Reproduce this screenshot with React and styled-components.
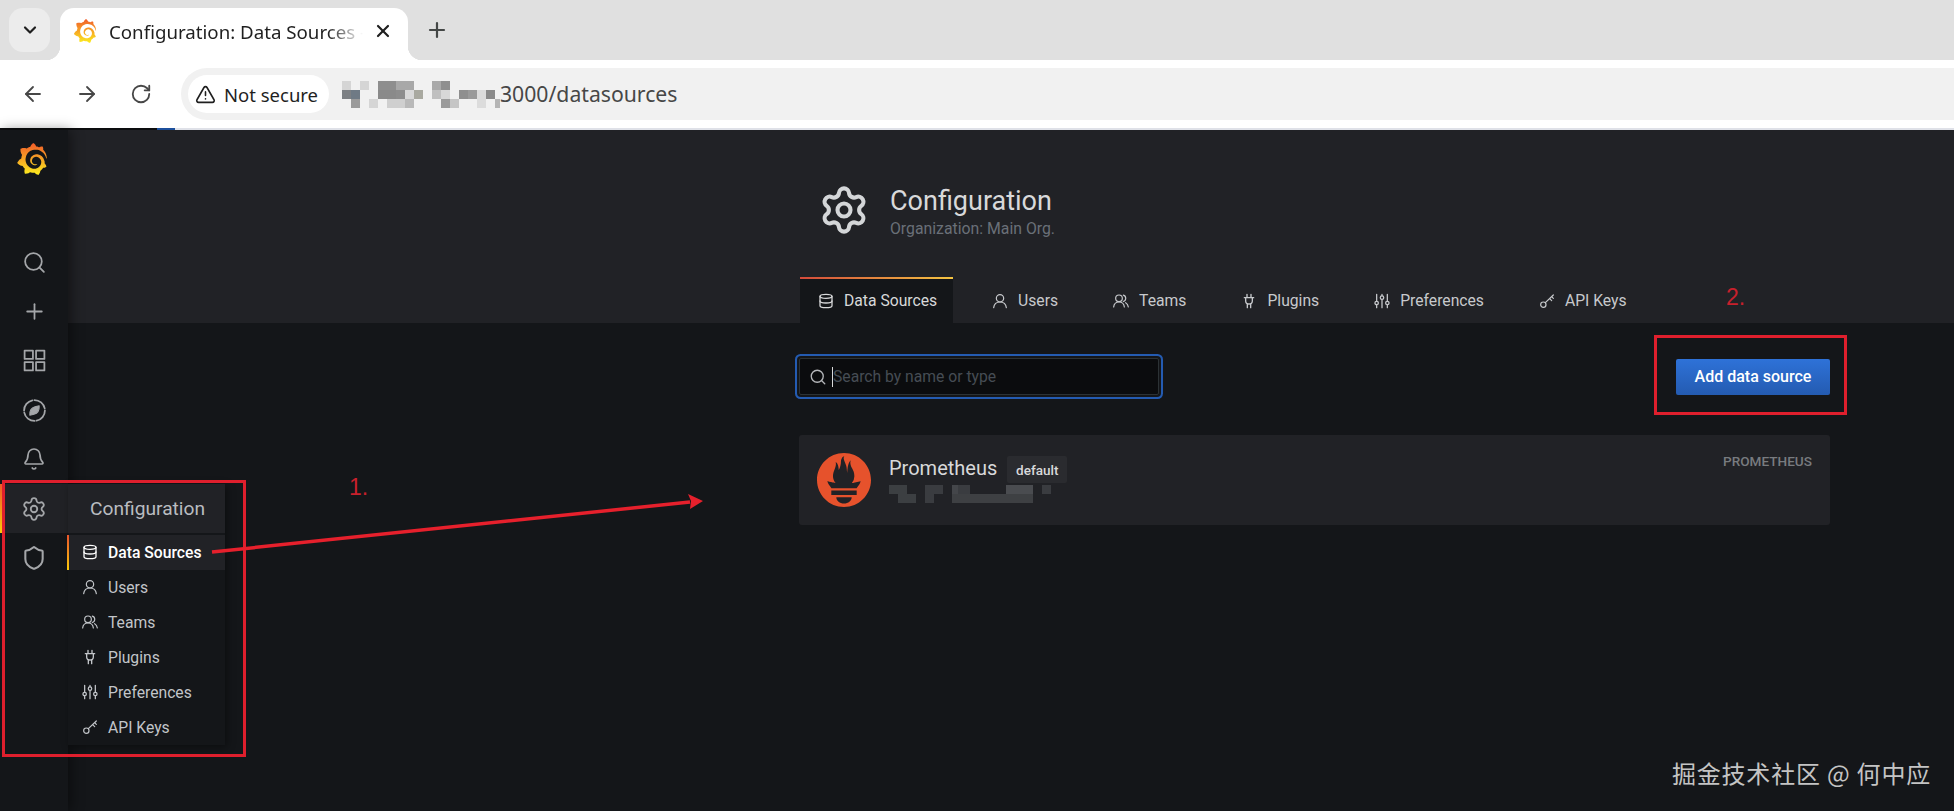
import styled, { createGlobalStyle } from 'styled-components'
import { ChevronDown, X, Plus, ArrowLeft, ArrowRight, RotateCw, TriangleAlert, Search, Bell, Settings, Shield, Database } from 'lucide-react'
import { SiGrafana, SiPrometheus } from 'react-icons/si'

const GlobalStyle = createGlobalStyle`
	html, body {
		margin: 0;
		padding: 0;
		background: #141619;
	}
	* {
		box-sizing: border-box;
	}
`

const Page = styled.div`
	position: relative;
	width: 1954px;
	height: 811px;
	overflow: hidden;
	display: flex;
	flex-direction: column;
	font-family: Roboto, "Liberation Sans", sans-serif;
`

/* browser chrome */
const TabStrip = styled.div`
	height: 60px;
	background: #e0e0e0;
	display: flex;
	align-items: flex-start;
	padding: 8px 0 0 9px;
	font-family: "Noto Sans", "Open Sans", sans-serif;
`

const TabMenu = styled.div`
	width: 41px;
	height: 44px;
	border-radius: 14px;
	background: #ececec;
	color: #1f1f1f;
	display: flex;
	align-items: center;
	justify-content: center;
`

const BrowserTab = styled.div`
	position: relative;
	width: 348px;
	height: 52px;
	margin-left: 10px;
	padding: 0 15px 6px 13px;
	background: #fff;
	border-radius: 14px 14px 0 0;
	display: flex;
	align-items: center;
	color: #1f1f1f;

	&::before, &::after {
		content: '';
		position: absolute;
		bottom: 0;
		width: 14px;
		height: 14px;
	}
	&::before {
		left: -14px;
		background: radial-gradient(circle at 0 0, transparent 14px, #fff 14.5px);
	}
	&::after {
		right: -14px;
		background: radial-gradient(circle at 100% 0, transparent 14px, #fff 14.5px);
	}
`

const TabTitle = styled.span`
	flex: 1;
	margin-left: 12px;
	margin-right: 10px;
	font-size: 18.7px;
	white-space: nowrap;
	overflow: hidden;
	-webkit-mask-image: linear-gradient(to right, #000 86%, transparent 100%);
	mask-image: linear-gradient(to right, #000 86%, transparent 100%);
`

const NewTab = styled.div`
	margin: 10px 0 0 17px;
	color: #444746;
	display: flex;
`

const Toolbar = styled.div`
	position: relative;
	height: 70px;
	background: #fff;
	display: flex;
	align-items: center;
	padding: 0 0 0 21px;
	border-bottom: 2px solid #dfe1e8;
	font-family: "Noto Sans", "Open Sans", sans-serif;
	color: #474747;

	&::after {
		content: '';
		position: absolute;
		left: 0;
		bottom: -2px;
		width: 175px;
		height: 2px;
		background: linear-gradient(to right, #0c0d0f 90%, #1c4f9c 90%);
	}
`

const NavButton = styled.div`
	width: 24px;
	height: 24px;
	margin-right: 30px;
	color: #474747;
	display: flex;
	align-items: center;
	justify-content: center;
`

const AddressBar = styled.div`
	flex: 1;
	height: 52px;
	margin-left: -2px;
	padding-left: 7px;
	background: #f1f1f1;
	border-radius: 26px 0 0 26px;
	display: flex;
	align-items: center;
`

const SecurityChip = styled.div`
	width: 141px;
	height: 38px;
	margin-right: 13px;
	padding-left: 7px;
	background: #fff;
	border-radius: 19px;
	display: flex;
	align-items: center;
	gap: 8px;
	font-size: 18.5px;
	color: #1f1f1f;
	white-space: nowrap;
`

const AddressText = styled.span`
	font-size: 21.2px;
	color: #474747;
	line-height: 1;
`

/* grafana shell */
const Shell = styled.div`
	flex: 1;
	display: flex;
	min-height: 0;
`

const SideMenu = styled.nav`
	position: relative;
	z-index: 2;
	width: 68px;
	flex-shrink: 0;
	background: #141619;
	box-shadow: 3px 0 12px rgba(0, 0, 0, 0.45);
	display: flex;
	flex-direction: column;
`

const LogoBlock = styled.div`
	height: 108px;
	padding: 13px 0 0 16px;
`

const SideItem = styled.div`
	position: relative;
	height: 49.2px;
	display: flex;
	align-items: center;
	justify-content: center;
	color: #a4a6a9;
	background: ${p => (p.$active ? '#212226' : 'transparent')};

	&::before {
		content: '';
		display: ${p => (p.$active ? 'block' : 'none')};
		position: absolute;
		left: 0;
		top: 0;
		bottom: 0;
		width: 2px;
		background: linear-gradient(#f05a28, #fbca0a);
	}
`

const Flyout = styled.div`
	position: absolute;
	left: 68px;
	top: 0;
	width: 157px;
	background: #141619;
	box-shadow: 2px 2px 8px rgba(0, 0, 0, 0.4);
`

const FlyoutTitle = styled.div`
	height: 49px;
	margin-bottom: 2px;
	padding-left: 22px;
	display: flex;
	align-items: center;
	background: #212226;
	font-size: 19.2px;
	color: #b9bcc0;
`

const FlyoutItem = styled.div`
	position: relative;
	height: 35px;
	padding-left: 14px;
	display: flex;
	align-items: center;
	gap: 10px;
	font-size: 15.7px;
	font-weight: ${p => (p.$active ? 500 : 400)};
	color: ${p => (p.$active ? '#ffffff' : '#c2c5c9')};
	background: ${p => (p.$active ? '#212226' : 'transparent')};

	&::before {
		content: '';
		display: ${p => (p.$active ? 'block' : 'none')};
		position: absolute;
		left: -1px;
		top: 0;
		bottom: 0;
		width: 2px;
		background: linear-gradient(#e9532b, #fbca0a);
	}
`

const Main = styled.main`
	flex: 1;
	display: flex;
	flex-direction: column;
	min-width: 0;
	background: #141619;
`

const PageHeader = styled.header`
	height: 193px;
	padding: 54px 124px 0 732px;
	background: #212226;
	display: flex;
	flex-direction: column;
	justify-content: space-between;
`

const HeaderInfo = styled.div`
	display: flex;
	align-items: flex-start;
	gap: 20px;
	padding-left: 18px;
	color: #d4d6d8;
`

const HeaderText = styled.div`
	padding-top: 2px;
`

const HeaderTitle = styled.h1`
	margin: 0;
	font-size: 27px;
	font-weight: 400;
	line-height: 30px;
	color: #d8d9da;
`

const HeaderSub = styled.div`
	margin-top: 3px;
	font-size: 15.8px;
	line-height: 20px;
	color: #6a7078;
`

const Tabs = styled.div`
	display: flex;
	gap: 21px;
`

const Tab = styled.div`
	position: relative;
	height: 46px;
	padding: 1px 16px 0 18px;
	display: flex;
	align-items: center;
	gap: 10px;
	font-size: 15.7px;
	color: ${p => (p.$active ? '#d8d9da' : '#c7c9cc')};
	background: ${p => (p.$active ? '#141619' : 'transparent')};

	&::before {
		content: '';
		display: ${p => (p.$active ? 'block' : 'none')};
		position: absolute;
		left: 0;
		right: 0;
		top: 0;
		height: 2px;
		background: linear-gradient(to right, #d44a3a, #f5c542);
	}
`

const Content = styled.section`
	padding: 35px 124px 0 731px;
`

const ActionRow = styled.div`
	display: flex;
	align-items: center;
	justify-content: space-between;
`

const SearchBox = styled.div`
	width: 360px;
	height: 37px;
	padding-left: 9px;
	background: #0b0c0e;
	border: 1px solid #2c3235;
	border-radius: 2px;
	box-shadow: 0 0 0 2px #141619, 0 0 0 4px #245bb1;
	display: flex;
	align-items: center;
	gap: 5px;
	color: #b5b7ba;
`

const Placeholder = styled.span`
	border-left: 1px solid #d8d9da;
	height: 20px;
	line-height: 20px;
	font-size: 15.7px;
	color: #464c54;
`

const AddButton = styled.button`
	width: 154px;
	height: 36px;
	padding: 0;
	border: none;
	border-radius: 2px;
	background: linear-gradient(#2e72d8, #245bb1);
	color: #fff;
	font-family: inherit;
	font-size: 16px;
	font-weight: 500;
`

const SourceCard = styled.div`
	height: 90px;
	margin-top: 40px;
	padding: 18px 18px 0;
	background: #212226;
	border-radius: 3px;
	display: flex;
	align-items: flex-start;
	gap: 18px;
`

const SourceBody = styled.div`
	flex: 1;
`

const SourceHead = styled.div`
	display: flex;
	align-items: center;
	gap: 10px;
	height: 30px;
	margin-bottom: 2px;
`

const SourceName = styled.span`
	font-size: 20px;
	color: #d8d9da;
`

const Badge = styled.span`
	width: 60px;
	height: 27px;
	margin-top: 3px;
	background: #2a2b2f;
	border-radius: 2px;
	display: flex;
	align-items: center;
	justify-content: center;
	font-size: 13.5px;
	font-weight: 500;
	color: #d8d9da;
`

const SourceType = styled.span`
	font-size: 13.6px;
	font-weight: 500;
	color: #787b7f;
`

/* annotations drawn on top of the screenshot */
const RedBox = styled.div`
	position: absolute;
	z-index: 5;
	left: ${p => p.$x}px;
	top: ${p => p.$y}px;
	width: ${p => p.$w}px;
	height: ${p => p.$h}px;
	border: 3px solid #df1f2d;
	pointer-events: none;
`

const RedNumber = styled.span`
	position: absolute;
	z-index: 5;
	left: ${p => p.$x}px;
	top: ${p => p.$y}px;
	font-family: "Liberation Sans", sans-serif;
	font-size: 23px;
	line-height: 24px;
	color: #c8202c;
`

const ArrowLayer = styled.svg`
	position: absolute;
	z-index: 5;
	left: 200px;
	top: 480px;
	pointer-events: none;
`

const Watermark = styled.div`
	position: absolute;
	z-index: 5;
	right: 23px;
	bottom: 23px;
	font-family: "Noto Sans CJK SC", "Noto Sans", sans-serif;
	font-size: 24px;
	line-height: 30px;
	letter-spacing: 0.8px;
	color: #c4c4c4;
`

const GrafanaLogo = ({ size }) => <SiGrafana size={size} fill="url(#grafanaFill)" />

const Stroke = ({ size = 16, children, width = 1.8 }) => (
	<svg width={size} height={size} viewBox="0 0 24 24" fill="none" stroke="currentColor" strokeWidth={width} strokeLinecap="round" strokeLinejoin="round">
		{children}
	</svg>
)

const PersonIcon = ({ size }) => (
	<Stroke size={size}>
		<circle cx="12" cy="8" r="5.5" />
		<path d="M2.5 22c.6-5 4.3-8.5 9.5-8.5s8.9 3.500 9.500 8.500" />
	</Stroke>
)

const TeamIcon = ({ size }) => (
	<Stroke size={size}>
		<circle cx="9" cy="8" r="5" />
		<path d="M1 21c.5-4.500 3.500-7.500 8-7.500s7.500 3 8 7.500" />
		<path d="M15.500 3.200a5 5 0 0 1 0 9.600M19 14.500c2.200 1.300 3.600 3.500 4 6.500" />
	</Stroke>
)

const KeyIcon = ({ size }) => (
	<Stroke size={size}>
		<circle cx="6.500" cy="17.500" r="4" />
		<path d="M9.500 14.500 21.500 3M16 8.500l3 3M19 5.500l2.500 2.500" />
	</Stroke>
)

const GridIcon = () => (
	<Stroke size={25} width={1.700}>
		<rect x="2.500" y="2.500" width="8" height="8" />
		<rect x="13.500" y="2.500" width="8" height="8" />
		<rect x="2.500" y="13.500" width="8" height="8" />
		<rect x="13.500" y="13.500" width="8" height="8" />
	</Stroke>
)

const CompassIcon = () => (
	<Stroke size={25} width={1.700}>
		<path d="M12 2a10 10 0 0 1 9.800 8M22 12a10 10 0 0 1-8 9.800M12 22a10 10 0 0 1-9.800-8M2 12a10 10 0 0 1 8-9.800" />
		<path d="M16.500 7.500c.3 4-1.500 7.300-5 8.200l-4 .8c-.3-4 1.500-7.300 5-8.200z" fill="currentColor" strokeWidth="1" />
	</Stroke>
)

const PluginIcon = ({ size }) => (
	<Stroke size={size} width={2}>
		<path d="M9 2v5M15 2v5M5 7h14M7 7v5c0 2.500 2 4.500 5 4.500s5-2 5-4.500V7" />
		<path d="M9.500 16.500V22M14.500 16.500V22" />
	</Stroke>
)

const SlidersIcon = ({ size }) => (
	<Stroke size={size} width={1.900}>
		<path d="M4 2v10M4 18v4M12 2v2M12 10v12M20 2v10M20 18v4" />
		<circle cx="4" cy="15" r="2.600" />
		<circle cx="12" cy="7" r="2.600" />
		<circle cx="20" cy="15" r="2.600" />
	</Stroke>
)

const Pixels = ({ cells, cellW, cellH, width, height }) => (
	<svg width={width} height={height} viewBox={`0 0 ${width} ${height}`} style={{ display: 'block', flexShrink: 0 }}>
		{cells.map(([col, row, fill, span = 1]) => (
			<rect key={`${col}-${row}`} x={col * cellW} y={row * cellH} width={cellW * span} height={cellH} fill={fill} />
		))}
	</svg>
)

const urlCells = [
	[0, 0, '#d5d5d5'], [2, 0, '#d5d5d5'], [4, 0, '#8e8e8e', 2], [6, 0, '#a8a8a8', 2], [10, 0, '#a9a9a9'], [11, 0, '#8f8f8f'],
	[0, 1, '#7c8084'], [1, 1, '#6f7a85'], [4, 1, '#8a8a8a', 2], [6, 1, '#8d8d8d'], [7, 1, '#d9d9d9'], [8, 1, '#a9a9a0'], [10, 1, '#c0c0c0'], [11, 1, '#d8d8d8'], [13, 1, '#8f8f8f'], [14, 1, '#9a9a9a'], [15, 1, '#dcdcdc'], [16, 1, '#8a8a8a'],
	[1, 2, '#9a9a9a'], [3, 2, '#d5d5d5'], [5, 2, '#cfcfcf', 2], [7, 2, '#b9b9b9'], [11, 2, '#9a9a9a'], [12, 2, '#c5c5c5'], [15, 2, '#dcdcdc'], [17, 2, '#b5b5b5'],
]

const hostCells = [
	[0, 0, '#3c3f42', 6], [12, 0, '#3a3c40', 6], [21, 0, '#44464a', 2], [23, 0, '#3a3c40', 4], [39, 0, '#4a4c50', 9], [51, 0, '#3a3c40', 3],
	[3, 1, '#3c3f42', 6], [12, 1, '#3a3c40', 3], [21, 1, '#3e4043', 27],
]

const navItems = [
	{ label: 'Data Sources', icon: <Database size={16} strokeWidth={1.900} />, active: true },
	{ label: 'Users', icon: <PersonIcon size={16} /> },
	{ label: 'Teams', icon: <TeamIcon size={16} /> },
	{ label: 'Plugins', icon: <PluginIcon size={16} /> },
	{ label: 'Preferences', icon: <SlidersIcon size={16} /> },
	{ label: 'API Keys', icon: <KeyIcon size={16} /> },
]

const App = () => {
	return (
		<Page>
			<GlobalStyle />
			<svg width="0" height="0" style={{ position: 'absolute' }}>
				<defs>
					<linearGradient id="grafanaFill" x1="0" y1="1" x2="0" y2="0">
						<stop offset="0" stopColor="#fcee1f" />
						<stop offset="1" stopColor="#f15b2a" />
					</linearGradient>
				</defs>
			</svg>

			<TabStrip>
				<TabMenu><ChevronDown size={20} strokeWidth={2.600} /></TabMenu>
				<BrowserTab>
					<GrafanaLogo size={24} />
					<TabTitle>Configuration: Data Sources -</TabTitle>
					<X size={20} strokeWidth={2.600} />
				</BrowserTab>
				<NewTab><Plus size={24} strokeWidth={2.200} /></NewTab>
			</TabStrip>
			<Toolbar>
				<NavButton><ArrowLeft size={24} strokeWidth={1.800} /></NavButton>
				<NavButton><ArrowRight size={24} strokeWidth={1.800} /></NavButton>
				<NavButton><RotateCw size={22} strokeWidth={2} /></NavButton>
				<AddressBar>
					<SecurityChip>
						<TriangleAlert size={21} strokeWidth={1.800} />
						Not secure
					</SecurityChip>
					<Pixels cells={urlCells} cellW={9} cellH={9} width={158} height={27} />
					<AddressText>3000/datasources</AddressText>
				</AddressBar>
			</Toolbar>

			<Shell>
				<SideMenu>
					<LogoBlock><GrafanaLogo size={32} /></LogoBlock>
					<SideItem><Search size={25} strokeWidth={1.700} /></SideItem>
					<SideItem><Plus size={25} strokeWidth={1.700} /></SideItem>
					<SideItem><GridIcon /></SideItem>
					<SideItem><CompassIcon /></SideItem>
					<SideItem><Bell size={24} strokeWidth={1.700} /></SideItem>
					<SideItem $active>
						<Settings size={26} strokeWidth={1.700} />
						<Flyout>
							<FlyoutTitle>Configuration</FlyoutTitle>
							{navItems.map(item => (
								<FlyoutItem key={item.label} $active={item.active}>
									{item.icon}
									{item.label}
								</FlyoutItem>
							))}
						</Flyout>
					</SideItem>
					<SideItem><Shield size={26} strokeWidth={1.900} /></SideItem>
				</SideMenu>

				<Main>
					<PageHeader>
						<HeaderInfo>
							<Settings size={52} strokeWidth={1.900} />
							<HeaderText>
								<HeaderTitle>Configuration</HeaderTitle>
								<HeaderSub>Organization: Main Org.</HeaderSub>
							</HeaderText>
						</HeaderInfo>
						<Tabs>
							{navItems.map(tab => (
								<Tab key={tab.label} $active={tab.active}>
									{tab.icon}
									{tab.label}
								</Tab>
							))}
						</Tabs>
					</PageHeader>

					<Content>
						<ActionRow>
							<SearchBox>
								<Search size={18} strokeWidth={1.800} />
								<Placeholder>Search by name or type</Placeholder>
							</SearchBox>
							<AddButton>Add data source</AddButton>
						</ActionRow>
						<SourceCard>
							<SiPrometheus size={54} color="#e6522c" />
							<SourceBody>
								<SourceHead>
									<SourceName>Prometheus</SourceName>
									<Badge>default</Badge>
								</SourceHead>
								<Pixels cells={hostCells} cellW={3} cellH={9} width={165} height={18} />
							</SourceBody>
							<SourceType>PROMETHEUS</SourceType>
						</SourceCard>
					</Content>
				</Main>
			</Shell>

			<RedBox $x={2} $y={480} $w={244} $h={277} />
			<RedBox $x={1654} $y={335} $w={193} $h={80} />
			<RedNumber $x={349} $y={475}>1.</RedNumber>
			<RedNumber $x={1726} $y={285}>2.</RedNumber>
			<ArrowLayer width="520" height="90" viewBox="0 0 520 90">
				<line x1="12" y1="72" x2="490" y2="22" stroke="#e6202c" strokeWidth="3.5" />
				<polygon points="503,21 488,14 491,21 490,29" fill="#e6202c" />
			</ArrowLayer>
			<Watermark>掘金技术社区 @ 何中应</Watermark>
		</Page>
	)
}

export default App
